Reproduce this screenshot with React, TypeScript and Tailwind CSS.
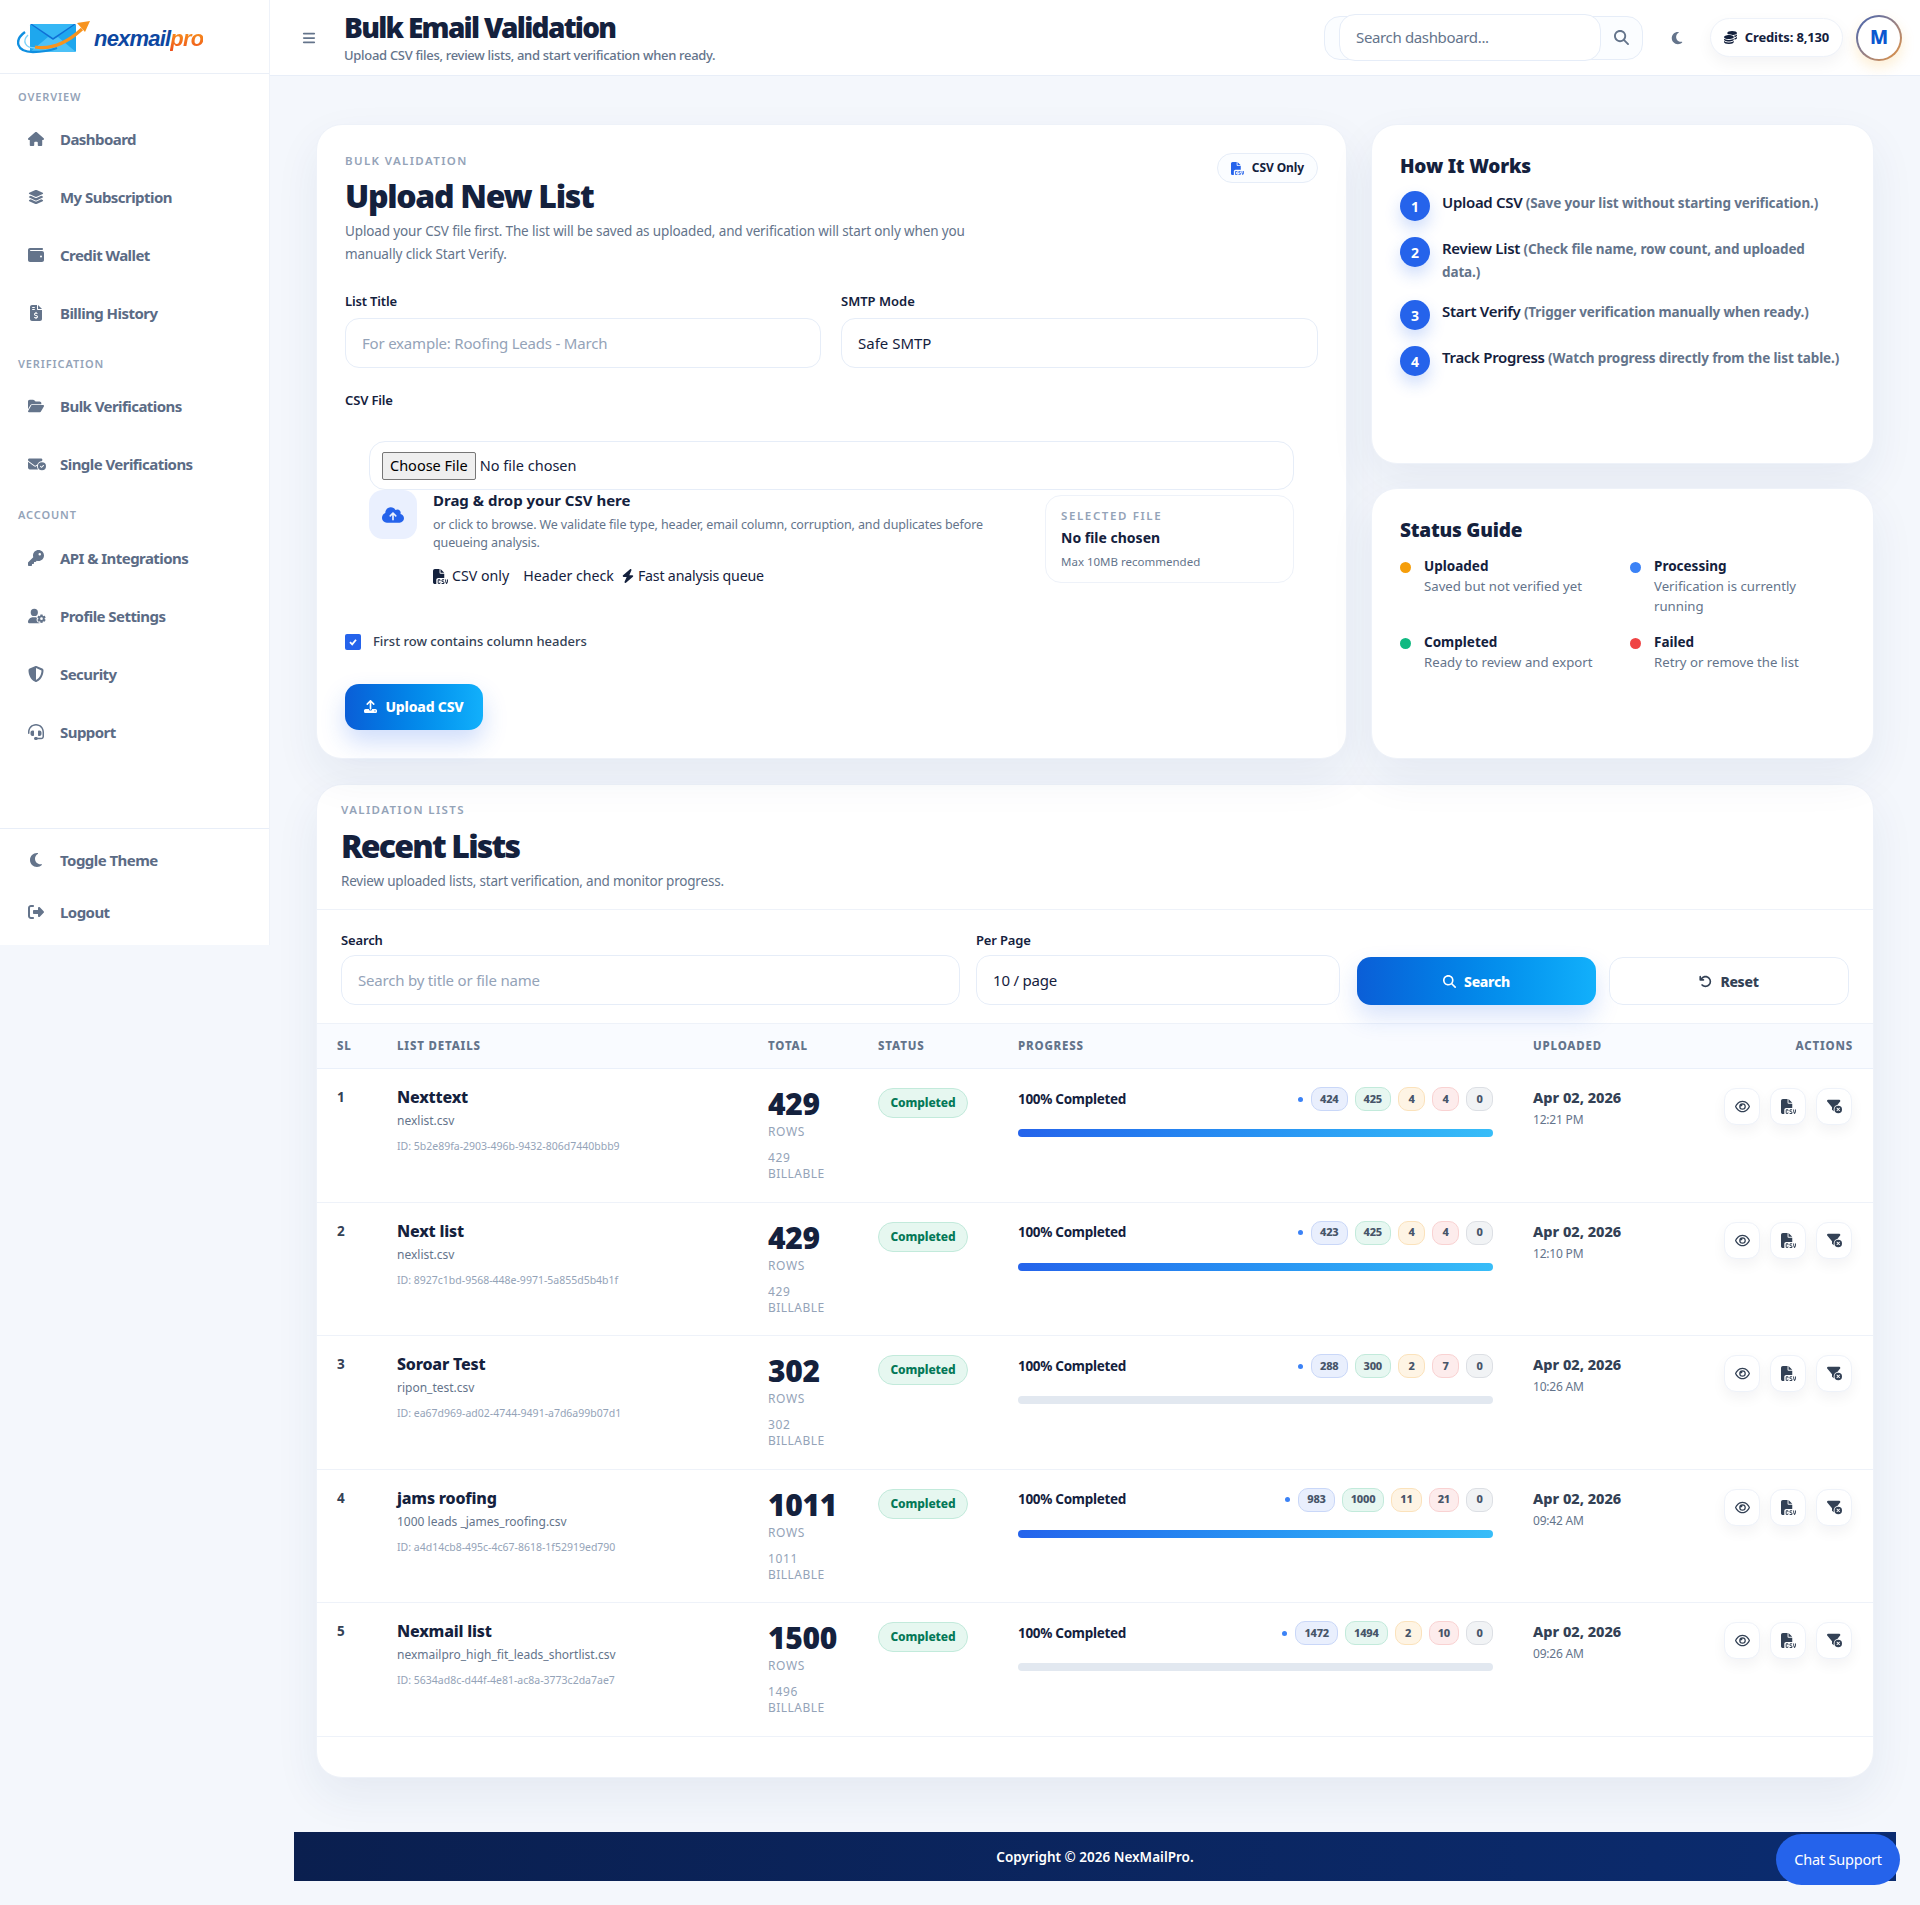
import React from "react";
import {
  FaArrowRotateLeft,
  FaBars,
  FaBolt,
  FaCloudArrowUp,
  FaCoins,
  FaEnvelopeCircleCheck,
  FaFileCsv,
  FaFileInvoiceDollar,
  FaFilterCircleXmark,
  FaFolderOpen,
  FaHeadset,
  FaHouse,
  FaKey,
  FaLayerGroup,
  FaMagnifyingGlass,
  FaMoon,
  FaRegEye,
  FaRightFromBracket,
  FaShieldHalved,
  FaUpload,
  FaUserGear,
  FaWallet,
} from "react-icons/fa6";

const lists = [
  { sl: 1, title: "Nexttext", file: "nexlist.csv", id: "5b2e89fa-2903-496b-9432-806d7440bbb9", total: "429", billable: "429", counts: ["424", "425", "4", "4", "0"], filled: true, date: "Apr 02, 2026", time: "12:21 PM" },
  { sl: 2, title: "Next list", file: "nexlist.csv", id: "8927c1bd-9568-448e-9971-5a855d5b4b1f", total: "429", billable: "429", counts: ["423", "425", "4", "4", "0"], filled: true, date: "Apr 02, 2026", time: "12:10 PM" },
  { sl: 3, title: "Soroar Test", file: "ripon_test.csv", id: "ea67d969-ad02-4744-9491-a7d6a99b07d1", total: "302", billable: "302", counts: ["288", "300", "2", "7", "0"], filled: false, date: "Apr 02, 2026", time: "10:26 AM" },
  { sl: 4, title: "jams roofing", file: "1000 leads _james_roofing.csv", id: "a4d14cb8-495c-4c67-8618-1f52919ed790", total: "1011", billable: "1011", counts: ["983", "1000", "11", "21", "0"], filled: true, date: "Apr 02, 2026", time: "09:42 AM" },
  { sl: 5, title: "Nexmail list", file: "nexmailpro_high_fit_leads_shortlist.csv", id: "5634ad8c-d44f-4e81-ac8a-3773c2da7ae7", total: "1500", billable: "1496", counts: ["1472", "1494", "2", "10", "0"], filled: false, date: "Apr 02, 2026", time: "09:26 AM" },
];

const pillColors = [
  "bg-[#e9effd] border-[#c9d7f8] text-[#475569]",
  "bg-[#e7f7f1] border-[#c2eadb] text-[#475569]",
  "bg-[#fef4e4] border-[#fbe2bb] text-[#475569]",
  "bg-[#fdecec] border-[#f9d2d2] text-[#475569]",
  "bg-[#f1f3f5] border-[#dcdfe4] text-[#475569]",
];

const steps = [
  { n: 1, title: "Upload CSV", note: "(Save your list without starting verification.)" },
  { n: 2, title: "Review List", note: "(Check file name, row count, and uploaded", more: "data.)" },
  { n: 3, title: "Start Verify", note: "(Trigger verification manually when ready.)" },
  { n: 4, title: "Track Progress", note: "(Watch progress directly from the list table.)" },
];

const NavItem = ({ icon, label }: { icon: React.ReactNode; label: string }) => (
  <div className="flex items-center h-[58px] pl-[28px] text-[15px] font-bold tracking-[-0.55px] text-[#5b6b85]">
    <span className="w-[32px] flex items-center text-[16px] text-[#64748b]">{icon}</span>
    {label}
  </div>
);

const NavLabel = ({ children }: { children: React.ReactNode }) => (
  <div className="pl-[18px] h-[16px] leading-[16px] text-[11px] font-semibold tracking-[0.08em] text-[#94a3b8]">
    {children}
  </div>
);

const Logo = () => (
  <div className="flex items-center gap-[3px]">
    <svg width="74" height="34" viewBox="0 0 74 34" fill="none">
      <rect x="13" y="3" width="46" height="28" rx="1.5" fill="#1ea7ee" />
      <path d="M13 3h46L36 19z" fill="#0f6fd6" />
      <path d="M15 3h42L36 17z" fill="#35b7f5" />
      <path d="M13 31l18-15 5 3 5-3 18 15z" fill="#4cc1f7" />
      <path d="M8 11C-3 19 -1 31 16 31c8 0 16-1 24-4" stroke="#0f8fe0" strokeWidth="2.4" fill="none" />
      <path d="M11 14C5 20 8 27 18 27" stroke="#7fd4fa" strokeWidth="1.4" fill="none" />
      <path d="M18 26c17 3 34-6 47-18" stroke="#f7931e" strokeWidth="3.2" fill="none" />
      <path d="M73 0l-13 2 8 9z" fill="#f7931e" />
    </svg>
    <span className="mt-[2px] font-['Liberation_Sans',sans-serif] italic font-bold text-[22px] leading-none tracking-[-0.8px] text-[#0d47a1]">
      nexmail
      <span className="bg-gradient-to-b from-[#f7a11e] to-[#ee4e1a] bg-clip-text text-transparent">pro</span>
    </span>
  </div>
);

const Sidebar = () => (
  <aside className="w-[270px] h-[945px] shrink-0 bg-white flex flex-col border-r border-[#eef2f9]">
    <div className="h-[74px] shrink-0 flex items-center pl-[17px] pt-[2px] border-b border-[#eaeff7]">
      <Logo />
    </div>
    <div className="pt-[15px]">
      <div className="mb-[5px]"><NavLabel>OVERVIEW</NavLabel></div>
      <NavItem icon={<FaHouse />} label="Dashboard" />
      <NavItem icon={<FaLayerGroup />} label="My Subscription" />
      <NavItem icon={<FaWallet />} label="Credit Wallet" />
      <NavItem icon={<FaFileInvoiceDollar />} label="Billing History" />
      <div className="mt-[14px] mb-[5px]"><NavLabel>VERIFICATION</NavLabel></div>
      <NavItem icon={<FaFolderOpen />} label="Bulk Verifications" />
      <NavItem icon={<FaEnvelopeCircleCheck size={18} />} label="Single Verifications" />
      <div className="mt-[14px] mb-[6px]"><NavLabel>ACCOUNT</NavLabel></div>
      <NavItem icon={<FaKey />} label="API & Integrations" />
      <NavItem icon={<FaUserGear size={18} />} label="Profile Settings" />
      <NavItem icon={<FaShieldHalved />} label="Security" />
      <NavItem icon={<FaHeadset />} label="Support" />
    </div>
    <div className="mt-[67px] border-t border-[#e8eef8] pt-[5px]">
      <div className="flex items-center h-[52px] pl-[28px] text-[15px] font-bold tracking-[-0.55px] text-[#5b6b85]">
        <span className="w-[32px] text-[16px] text-[#64748b]"><FaMoon /></span>
        Toggle Theme
      </div>
      <div className="flex items-center h-[52px] pl-[28px] text-[15px] font-bold tracking-[-0.55px] text-[#5b6b85]">
        <span className="w-[32px] text-[16px] text-[#64748b]"><FaRightFromBracket /></span>
        Logout
      </div>
    </div>
  </aside>
);

const Header = () => (
  <header className="h-[76px] bg-white border-b border-[#e8eef8] flex items-center">
    <div className="w-[74px] pl-[32px] text-[14px] text-[#64748b]"><FaBars size={14} /></div>
    <div className="flex-1">
      <h1 className="-mt-[1px] text-[28px] leading-[34px] font-black text-[#14213d] tracking-[-1.7px]">Bulk Email Validation</h1>
      <p className="mt-[1px] text-[13px] leading-[20px] font-medium tracking-[-0.3px] text-[#64748b]">Upload CSV files, review lists, and start verification when ready.</p>
    </div>
    <div className="flex items-center w-[319px] h-[44px] border border-[#e6edf8] rounded-[16px] bg-[#fbfdff] pl-[14px] mr-[27px]">
      <div className="w-[262px] h-[47px] bg-white border border-[#e6edf8] rounded-[16px] flex items-center pl-[16px] text-[15px] tracking-[-0.35px] text-[#64748b]">
        Search dashboard...
      </div>
      <div className="flex-1 flex justify-center text-[#64748b]"><FaMagnifyingGlass size={15} /></div>
    </div>
    <div className="w-[16px] text-[#64748b]"><FaMoon size={14} /></div>
    <div className="ml-[24px] w-[133px] h-[39px] border border-[#eef2f9] rounded-full bg-white shadow-[0_6px_16px_rgba(15,23,42,0.05)] flex items-center justify-center gap-[8px] text-[13px] font-bold tracking-[-0.15px] text-[#14213d]">
      <FaCoins size={13} />
      Credits: 8,130
    </div>
    <div className="ml-[13px] mr-[18px] w-[46px] h-[46px] rounded-full p-[2px] bg-gradient-to-br from-[#3f5fb0] to-[#e8922a] shadow-[0_6px_14px_rgba(245,158,11,0.18)]">
      <div className="w-full h-full rounded-full bg-white flex items-center justify-center text-[19px] font-extrabold text-[#0b57d0]">M</div>
    </div>
  </header>
);

const cardClass = "bg-white rounded-[26px] border border-[#eef2f9] shadow-[0_18px_45px_rgba(30,58,110,0.07)]";
const inputClass = "w-full h-[50px] rounded-[14px] border border-[#e6edf8] bg-white px-[16px] flex items-center text-[15px]";

const UploadCard = () => (
  <section className={`${cardClass} w-[1031px] h-[635px] shrink-0 pl-[28px] pr-[28px] pt-[28px]`}>
    <div className="flex justify-between">
      <div>
        <div className="text-[11.5px] leading-[16px] font-semibold tracking-[0.12em] text-[#94a3b8]">BULK VALIDATION</div>
        <h2 className="mt-[5px] text-[32px] leading-[44px] font-black text-[#14213d] tracking-[-1.3px]">Upload New List</h2>
      </div>
      <div className="h-[30px] px-[13px] rounded-full border border-[#e6edf8] bg-[#fbfdff] flex items-center gap-[8px] text-[12px] font-bold tracking-[-0.1px] text-[#14213d]">
        <FaFileCsv className="text-[#2563eb]" size={13} />
        CSV Only
      </div>
    </div>
    <p className="mt-[2px] w-[650px] text-[13.5px] leading-[23px] tracking-[-0.13px] text-[#64748b]">
      Upload your CSV file first. The list will be saved as uploaded, and verification will start only when you manually click Start Verify.
    </p>
    <div className="mt-[25px] grid grid-cols-[476px_477px] gap-x-[20px]">
      <div>
        <div className="text-[13px] leading-[20px] font-semibold tracking-[-0.15px] text-[#14213d] mb-[7px]">List Title</div>
        <div className={`${inputClass} tracking-[-0.2px] text-[#94a3b8]`}>For example: Roofing Leads - March</div>
      </div>
      <div>
        <div className="text-[13px] leading-[20px] font-semibold text-[#14213d] mb-[7px]">SMTP Mode</div>
        <div className={`${inputClass} text-[#14213d]`}>Safe SMTP</div>
      </div>
    </div>
    <div className="mt-[22px] text-[13px] leading-[20px] font-semibold tracking-[-0.15px] text-[#14213d]">CSV File</div>
    <div className="mt-[31px] ml-[24px] w-[925px]">
      <div className="h-[49px] rounded-[16px] border border-[#e6edf8] flex items-center pl-[12px]">
        <input
          type="file"
          className="text-[14.5px] text-[#14213d] file:mr-[4px] file:h-[28px] file:px-[7px] file:bg-[#efefef] file:border file:border-[#767676] file:rounded-[2px] file:text-[14.5px] file:text-black"
        />
      </div>
      <div className="flex">
        <div className="w-[48px] h-[49px] shrink-0 rounded-[14px] bg-[#eaf0fe] flex items-center justify-center text-[#2563eb]">
          <FaCloudArrowUp size={22} />
        </div>
        <div className="ml-[16px] w-[590px]">
          <div className="-mt-[1px] text-[15px] leading-[22px] font-bold text-[#14213d]">Drag &amp; drop your CSV here</div>
          <p className="mt-[5px] text-[12.5px] leading-[18px] tracking-[-0.125px] text-[#64748b]">
            or click to browse. We validate file type, header, email column, corruption, and duplicates before queueing analysis.
          </p>
          <div className="mt-[12px] flex items-center text-[14.2px] leading-[24px] text-[#14213d]">
            <FaFileCsv size={15} className="mr-[4px]" />
            CSV only
            <span className="ml-[14px]">Header check</span>
            <FaBolt size={14} className="ml-[7px] mr-[3px]" />
            <span className="tracking-[-0.2px]">Fast analysis queue</span>
          </div>
        </div>
        <div className="ml-[22px] mt-[5px] w-[249px] h-[88px] rounded-[16px] border border-[#eef2f9] pl-[15px] pt-[12px]">
          <div className="text-[11.5px] leading-[16px] font-semibold tracking-[0.14em] text-[#94a3b8]">SELECTED FILE</div>
          <div className="mt-[4px] text-[14px] leading-[20px] font-bold text-[#14213d]">No file chosen</div>
          <div className="mt-[5px] text-[11.5px] leading-[18px] text-[#64748b]">Max 10MB recommended</div>
        </div>
      </div>
    </div>
    <div className="mt-[44px] flex items-center gap-[12px] text-[13px] font-medium text-[#334155]">
      <span className="w-[16px] h-[16px] rounded-[2px] bg-[#2563eb] flex items-center justify-center">
        <svg width="10" height="10" viewBox="0 0 10 10" fill="none"><path d="M2 5.2l2.2 2.2L8 2.8" stroke="#fff" strokeWidth="1.8" /></svg>
      </span>
      First row contains column headers
    </div>
    <button className="mt-[32px] w-[138px] h-[46px] rounded-[14px] bg-gradient-to-r from-[#0b5ed7] to-[#12b0fb] shadow-[0_12px_24px_rgba(37,99,235,0.22)] flex items-center justify-center gap-[8px] text-[14px] font-extrabold tracking-[-0.2px] text-white">
      <FaUpload size={13} />
      Upload CSV
    </button>
  </section>
);

const HowItWorks = () => (
  <section className={`${cardClass} h-[340px] pl-[28px] pr-[20px] pt-[26px]`}>
    <h3 className="text-[19px] leading-[30px] font-black tracking-[-0.2px] text-[#14213d]">How It Works</h3>
    <div className="mt-[10px] flex flex-col gap-[16px]">
      {steps.map((s) => (
        <div key={s.n} className="flex gap-[12px]">
          <span className="w-[30px] h-[30px] shrink-0 rounded-full bg-[#2563eb] text-white text-[14px] font-bold flex items-center justify-center shadow-[0_8px_16px_rgba(37,99,235,0.22)]">
            {s.n}
          </span>
          <div className="text-[13.5px] leading-[23px] font-bold tracking-[-0.12px] text-[#64748b]">
            <div>
              <span className="text-[15px] font-semibold tracking-[-0.3px] text-[#14213d]">{s.title}</span> {s.note}
            </div>
            {s.more && <div>{s.more}</div>}
          </div>
        </div>
      ))}
    </div>
  </section>
);

const GuideItem = ({ dot, title, note }: { dot: string; title: string; note: string }) => (
  <div className="flex gap-[13px]">
    <span className={`w-[11px] h-[11px] mt-[6px] shrink-0 rounded-full ${dot}`} />
    <div>
      <div className="text-[13.5px] leading-[20px] font-bold text-[#14213d]">{title}</div>
      <div className="text-[13.2px] leading-[20px] text-[#64748b]">{note}</div>
    </div>
  </div>
);

const StatusGuide = () => (
  <section className={`${cardClass} h-[271px] pl-[28px] pr-[28px] pt-[26px]`}>
    <h3 className="text-[19px] leading-[30px] font-black tracking-[-0.2px] text-[#14213d]">Status Guide</h3>
    <div className="mt-[11px] grid grid-cols-[230px_190px] gap-y-[16px]">
      <GuideItem dot="bg-[#f59e0b]" title="Uploaded" note="Saved but not verified yet" />
      <GuideItem dot="bg-[#3b82f6]" title="Processing" note="Verification is currently running" />
      <GuideItem dot="bg-[#10b981]" title="Completed" note="Ready to review and export" />
      <GuideItem dot="bg-[#ef4444]" title="Failed" note="Retry or remove the list" />
    </div>
  </section>
);

const RecentLists = () => (
  <section className={`${cardClass} mt-[25px] h-[994px] overflow-hidden`}>
    <div className="h-[125px] border-b border-[#eef2f9] pl-[24px] pt-[17px]">
      <div className="text-[11.5px] leading-[16px] font-semibold tracking-[0.12em] text-[#94a3b8]">VALIDATION LISTS</div>
      <h2 className="mt-[6px] text-[32px] leading-[44px] font-black text-[#14213d] tracking-[-1.8px]">Recent Lists</h2>
      <p className="mt-[2px] text-[13.5px] leading-[22px] tracking-[-0.2px] text-[#64748b]">Review uploaded lists, start verification, and monitor progress.</p>
    </div>
    <div className="h-[114px] pl-[24px] pt-[21px] flex items-end pb-[18px] border-b border-[#eef2f9] gap-[16px]">
      <div className="w-[619px]">
        <div className="text-[13px] leading-[20px] font-semibold tracking-[-0.15px] text-[#14213d] mb-[5px]">Search</div>
        <div className={`${inputClass} tracking-[-0.2px] text-[#94a3b8]`}>Search by title or file name</div>
      </div>
      <div className="w-[364px]">
        <div className="text-[13px] leading-[20px] font-semibold tracking-[-0.15px] text-[#14213d] mb-[5px]">Per Page</div>
        <div className={`${inputClass} tracking-[-0.2px] text-[#14213d]`}>10 / page</div>
      </div>
      <button className="ml-[1px] w-[239px] h-[48px] rounded-[14px] bg-gradient-to-r from-[#0b5ed7] to-[#12b0fb] flex items-center justify-center gap-[8px] text-[14px] font-extrabold tracking-[-0.3px] text-white shadow-[0_12px_24px_rgba(37,99,235,0.18)]">
        <FaMagnifyingGlass size={13} />
        Search
      </button>
      <button className="-ml-[3px] w-[240px] h-[48px] rounded-[14px] border border-[#e6edf8] bg-white flex items-center justify-center gap-[8px] text-[14px] font-extrabold tracking-[-0.3px] text-[#334155]">
        <FaArrowRotateLeft size={13} />
        Reset
      </button>
    </div>
    <div className="h-[45px] grid grid-cols-[60px_371px_110px_140px_515px_1fr_auto] items-center bg-[#f9fbff] border-b border-[#eaf0fa] pr-[20px] text-[11.5px] font-extrabold tracking-[0.07em] text-[#64748b]">
      <div className="pl-[20px]">SL</div>
      <div className="pl-[20px]">LIST DETAILS</div>
      <div className="pl-[20px]">TOTAL</div>
      <div className="pl-[20px]">STATUS</div>
      <div className="pl-[20px]">PROGRESS</div>
      <div className="pl-[20px]">UPLOADED</div>
      <div>ACTIONS</div>
    </div>
    {lists.map((l) => (
      <div key={l.sl} className="h-[133.5px] grid grid-cols-[60px_371px_110px_140px_515px_1fr_auto] pr-[21px] pt-[18px] border-b border-[#eef2f9]">
        <div className="pl-[20px] text-[13.5px] leading-[20px] font-bold text-[#334155]">{l.sl}</div>
        <div className="pl-[20px]">
          <div className="text-[16px] leading-[20px] font-extrabold tracking-[-0.2px] text-[#14213d]">{l.title}</div>
          <div className="mt-[4px] text-[12px] leading-[20px] text-[#64748b]">{l.file}</div>
          <div className="mt-[7px] text-[10.5px] leading-[16px] text-[#94a3b8]">ID: {l.id}</div>
        </div>
        <div className="pl-[20px]">
          <div className="text-[30px] leading-[34px] font-black tracking-[-0.3px] text-[#14213d]">{l.total}</div>
          <div className="mt-[3px] text-[12px] leading-[16px] tracking-[0.05em] text-[#94a3b8]">ROWS</div>
          <div className="mt-[10px] text-[12px] leading-[16px] tracking-[0.05em] text-[#94a3b8]">{l.billable}</div>
          <div className="text-[12px] leading-[16px] tracking-[0.04em] text-[#94a3b8]">BILLABLE</div>
        </div>
        <div className="pl-[20px] pt-[1px]">
          <span className="inline-flex items-center justify-center w-[90px] h-[30px] rounded-full bg-[#e6f7f0] border border-[#c2eadb] text-[12px] font-extrabold tracking-[-0.1px] text-[#047857]">Completed</span>
        </div>
        <div className="pl-[20px] pr-[20px]">
          <div className="flex items-center justify-between h-[24px]">
            <span className="text-[13.5px] font-bold tracking-[-0.3px] text-[#14213d]">100% Completed</span>
            <div className="flex items-center gap-[7px]">
              <span className="w-[5px] h-[5px] rounded-full bg-[#3b82f6] mr-[1px]" />
              {l.counts.map((c, i) => (
                <span key={i} className={`h-[24px] min-w-[27px] px-[8px] rounded-[10px] border flex items-center justify-center text-[11px] font-extrabold tracking-[-0.2px] ${pillColors[i]}`}>
                  {c}
                </span>
              ))}
            </div>
          </div>
          <div className={`mt-[18px] h-[8px] rounded-full ${l.filled ? "bg-gradient-to-r from-[#2563eb] to-[#38bdf8]" : "bg-[#e2e8f0]"}`} />
        </div>
        <div className="pl-[20px]">
          <div className="text-[14.5px] leading-[20px] font-extrabold text-[#334155]">{l.date}</div>
          <div className="mt-[3px] text-[12px] leading-[20px] tracking-[-0.2px] text-[#64748b]">{l.time}</div>
        </div>
        <div className="flex gap-[10px] pt-[1px]">
          {[<FaRegEye size={15} key="v" />, <FaFileCsv size={15} key="c" />, <FaFilterCircleXmark size={15} key="f" />].map((icon, i) => (
            <span key={i} className="w-[36px] h-[37px] rounded-[12px] border border-[#eef2f9] bg-white shadow-[0_6px_14px_rgba(15,23,42,0.05)] flex items-center justify-center text-[#334155]">
              {icon}
            </span>
          ))}
        </div>
      </div>
    ))}
  </section>
);

export default function App() {
  return (
    <div className="relative flex items-start min-h-[1905px] bg-[#f4f7fc] font-['Noto_Sans',sans-serif]">
      <Sidebar />
      <main className="flex-1 min-w-0">
        <Header />
        <div className="px-[24px] pt-[48px] pb-[24px]">
          <div className="mx-[22px]">
            <div className="flex gap-[24px]">
              <UploadCard />
              <div className="flex-1 flex flex-col gap-[24px]">
                <HowItWorks />
                <StatusGuide />
              </div>
            </div>
            <RecentLists />
          </div>
          <footer className="mt-[54px] h-[49px] pt-[1px] bg-gradient-to-r from-[#0a1f4f] to-[#0b2c70] flex items-center justify-center text-[13.5px] font-semibold text-white">
            Copyright © 2026 NexMailPro.
          </footer>
        </div>
      </main>
      <button className="absolute left-[1776px] top-[1834px] w-[124px] h-[51px] rounded-full bg-[#2563eb] text-[14.5px] tracking-[-0.2px] text-white">
        Chat Support
      </button>
    </div>
  );
}
